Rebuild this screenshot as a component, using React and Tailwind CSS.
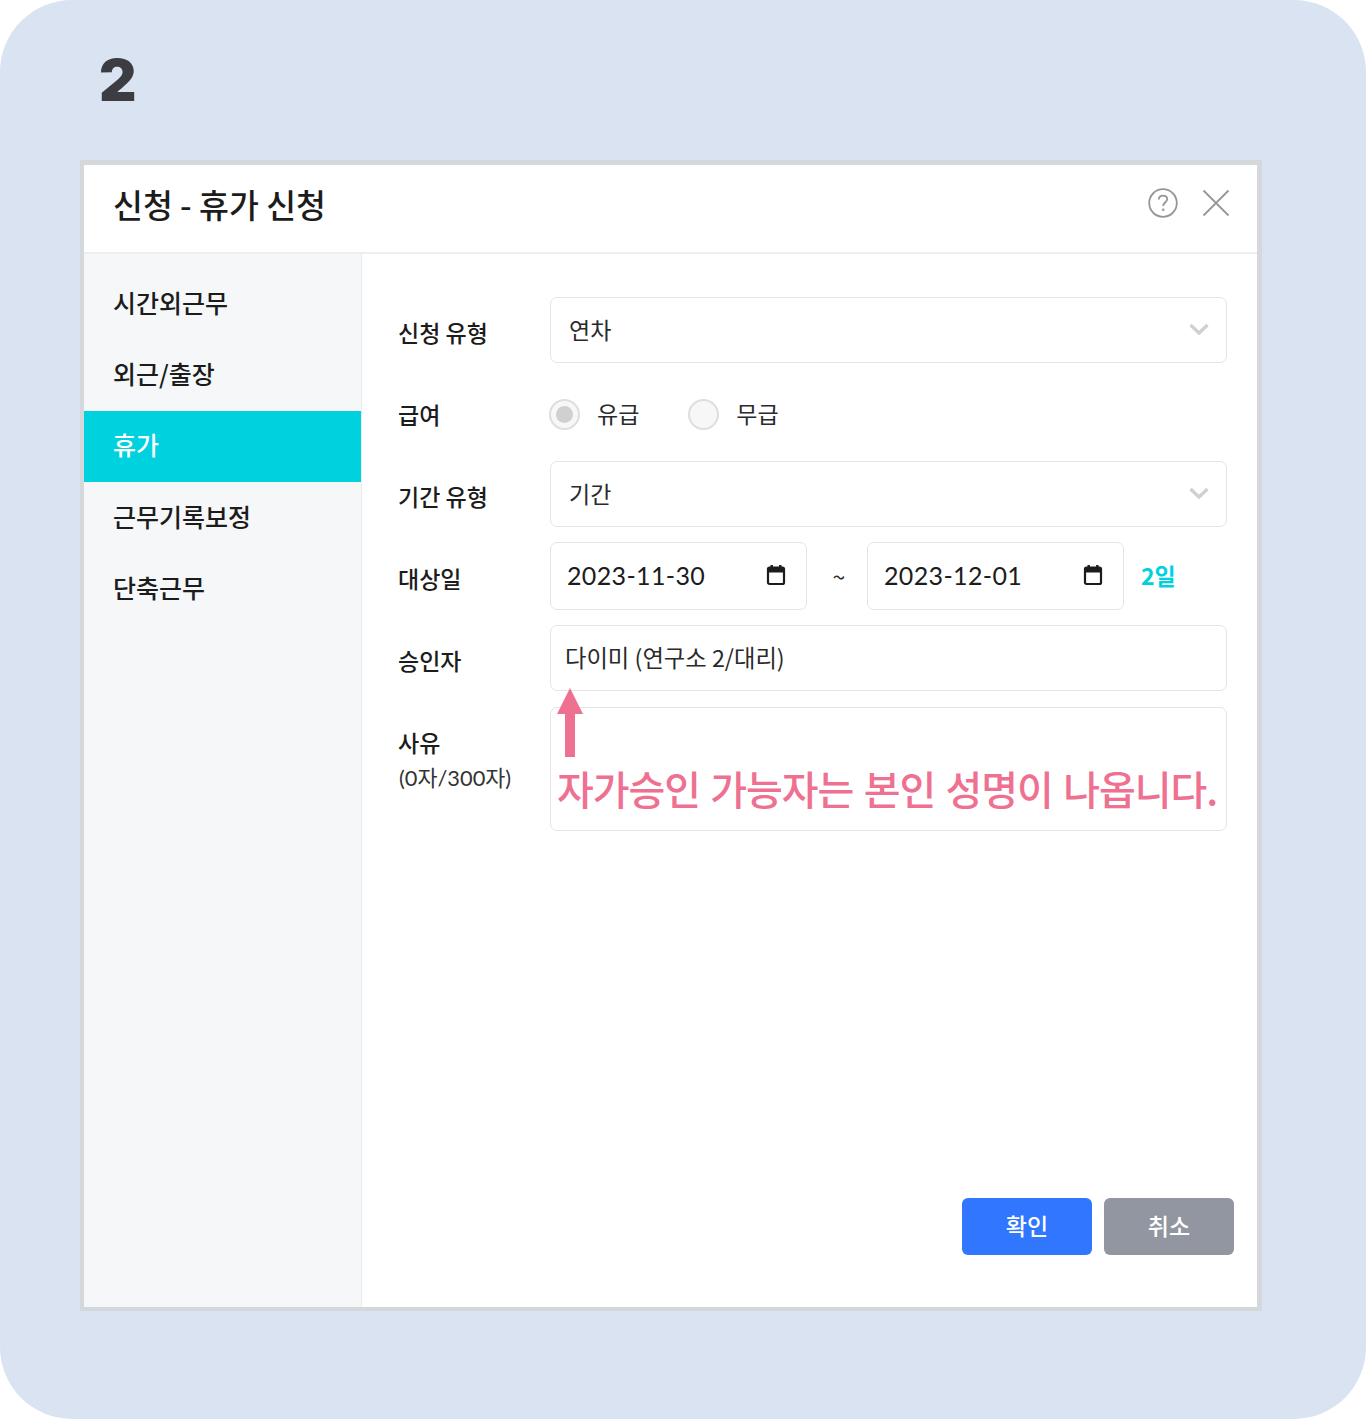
const KR = { fontFamily: '"Noto Sans CJK KR", "Noto Sans", sans-serif' };
const LATO = { fontFamily: 'Lato, "Noto Sans CJK KR", sans-serif' };

function Chevron() {
  return (
    <svg width="20" height="12" viewBox="0 0 20 12" fill="none" className="shrink-0 -translate-x-[1px] -translate-y-[1px]">
      <path d="M1.5 2 L10 10 L18.5 2" stroke="#d0d0d0" strokeWidth="3.4" />
    </svg>
  );
}

function Calendar() {
  return (
    <svg width="20" height="22" viewBox="0 0 20 22" fill="none" className="shrink-0 -translate-x-[1px] -translate-y-[1px]">
      <rect x="2" y="3.5" width="16" height="16.5" rx="1.5" stroke="#1c1c1c" strokeWidth="2.2" />
      <rect x="2" y="3.5" width="16" height="5" fill="#1c1c1c" />
      <rect x="4.5" y="1" width="2.4" height="4" fill="#1c1c1c" />
      <rect x="13.1" y="1" width="2.4" height="4" fill="#1c1c1c" />
    </svg>
  );
}

function Label({ children, flat }) {
  return <div className={`w-[152px] shrink-0 ${flat ? 'pt-0' : 'pt-[4px]'} text-[23px] font-medium text-[#1c1c1c]`}>{children}</div>;
}

function Select({ value }) {
  return (
    <div className="flex h-full flex-1 items-center justify-between rounded-[7px] border border-[#e4e4e4] bg-white pl-[18px] pr-[16px] text-[23px] text-[#2a2a2a]">
      <span className="-translate-y-[1px]">{value}</span>
      <Chevron />
    </div>
  );
}

function DateField({ value }) {
  return (
    <div className="flex h-full w-[257px] items-center justify-between rounded-[7px] border border-[#e4e4e4] bg-white pl-[16px] pr-[19px] text-[25px] tracking-[0.35px] text-[#1c1c1c]" style={LATO}>
      <span>{value}</span>
      <Calendar />
    </div>
  );
}

function Radio({ checked, label }) {
  return (
    <div className="flex items-center gap-[17px]">
      <span className="flex h-[31px] w-[31px] items-center justify-center rounded-full border-2 border-[#dedede] bg-[#f7f7f7]">
        {checked && <span className="h-[17px] w-[17px] rounded-full bg-[#d0d0d0]" />}
      </span>
      <span className="-translate-y-[1px] text-[23px] text-[#2a2a2a]">{label}</span>
    </div>
  );
}

const NAV = ['시간외근무', '외근/출장', '휴가', '근무기록보정', '단축근무'];

export default function App() {
  return (
    <div className="h-[1419px] w-[1366px] bg-white" style={KR}>
      <div className="h-full w-full rounded-[72px] bg-[#dae3f1] pl-[80px]">
        <div className="h-[160px] pl-[19px] pt-[38px] text-[58px] font-black leading-[84px] text-[#3c3d42]" style={{ fontFamily: 'Inter, sans-serif' }}>2</div>
        <div className="flex h-[1151px] w-[1182px] flex-col border-4 border-r-[5px] border-t-[5px] border-[#d5d8db] bg-white">
          <div className="flex h-[89px] shrink-0 items-center justify-between border-b-2 border-[#eeeeee] pl-[29px] pr-[27px]">
            <div className="-translate-y-[4px] text-[32.5px] font-medium text-[#1c1c1c]">신청 - 휴가 신청</div>
            <div className="flex -translate-y-[6px] items-center gap-[24px]">
              <svg width="30" height="30" viewBox="0 0 30 30" fill="none">
                <circle cx="15" cy="15" r="13.8" stroke="#969696" strokeWidth="1.8" />
                <path d="M10.8 11.5 C10.8 8.8 12.8 7.6 15 7.6 C17.4 7.6 19.2 9 19.2 11.2 C19.2 14 15.2 14.6 15.2 18" stroke="#969696" strokeWidth="1.8" />
                <circle cx="15.2" cy="21.8" r="1.3" fill="#969696" />
              </svg>
              <svg width="28" height="28" viewBox="0 0 28 28" fill="none">
                <path d="M1.5 1.5 L26.5 26.5 M26.5 1.5 L1.5 26.5" stroke="#969696" strokeWidth="1.8" />
              </svg>
            </div>
          </div>
          <div className="flex min-h-0 flex-1">
            <div className="w-[278px] shrink-0 border-r border-[#e8e9ea] bg-[#f5f7f9] pt-[14px]">
              {NAV.map((item, i) => (
                <div key={item} className={`flex h-[71.3px] items-center pl-[29px] text-[25px] font-medium ${i === 2 ? 'bg-[#00d1de] font-bold text-white' : 'text-[#1c1c1c]'}`}>
                  <span className="-translate-y-[1px]">{item}</span>
                </div>
              ))}
            </div>
            <div className="relative flex min-w-0 flex-1 flex-col pl-[36px] pr-[30px] pt-[43px]">
              <div className="flex h-[66px] items-center">
                <Label>신청 유형</Label>
                <Select value="연차" />
              </div>
              <div className="mt-[18px] flex h-[66px] items-center">
                <Label flat>급여</Label>
                <div className="-ml-[1px] flex items-center gap-[49px]">
                  <Radio checked label="유급" />
                  <Radio label="무급" />
                </div>
              </div>
              <div className="mt-[14px] flex h-[66px] items-center">
                <Label>기간 유형</Label>
                <Select value="기간" />
              </div>
              <div className="mt-[15px] flex h-[68px] items-center">
                <Label>대상일</Label>
                <DateField value="2023-11-30" />
                <span className="w-[60px] translate-x-[2px] text-center text-[23px] text-[#2a2a2a]">~</span>
                <DateField value="2023-12-01" />
                <span className="ml-[18px] -translate-x-[1px] -translate-y-[1px] text-[23px] font-bold text-[#00d1de]">2일</span>
              </div>
              <div className="mt-[15px] flex h-[66px] items-center">
                <Label>승인자</Label>
                <div className="flex h-full flex-1 items-center rounded-[7px] border border-[#e4e4e4] bg-white pl-[14px] text-[23.3px] text-[#2a2a2a]">
                  <span className="-translate-y-[1px]">다이미 (연구소 2/대리)</span>
                </div>
              </div>
              <div className="mt-[16px] flex h-[124px]">
                <div className="w-[152px] shrink-0 pt-[15px] text-[#1c1c1c]">
                  <div className="text-[23px] font-medium leading-[40px]">사유</div>
                  <div className="translate-x-[1px] translate-y-[1px] text-[21.8px] leading-[30px] text-[#333333]" style={LATO}>(0자/300자)</div>
                </div>
                <div className="flex-1 rounded-[7px] border border-[#e4e4e4] bg-white" />
              </div>
              <div className="absolute bottom-[52px] right-[23px] flex gap-[12px]">
                <div className="flex h-[57px] w-[130px] items-center justify-center rounded-[6px] bg-[#3176ff] pb-[3px] text-[23px] font-medium text-white">확인</div>
                <div className="flex h-[57px] w-[130px] items-center justify-center rounded-[6px] bg-[#9296a1] pb-[3px] text-[23px] font-medium text-white">취소</div>
              </div>
              <svg width="26" height="69" viewBox="0 0 26 69" className="absolute left-[195px] top-[434px]">
                <path d="M13 0 L26 26 L18 26 L18 69 L8 69 L8 26 L0 26 Z" fill="#ee7191" />
              </svg>
              <div className="absolute left-[195px] top-[504px] whitespace-nowrap text-[40px] font-medium leading-[60px] tracking-[-1.05px] text-[#ee7191] [word-spacing:2.4px]">자가승인 가능자는 본인 성명이 나옵니다.</div>
            </div>
          </div>
        </div>
      </div>
    </div>
  );
}
